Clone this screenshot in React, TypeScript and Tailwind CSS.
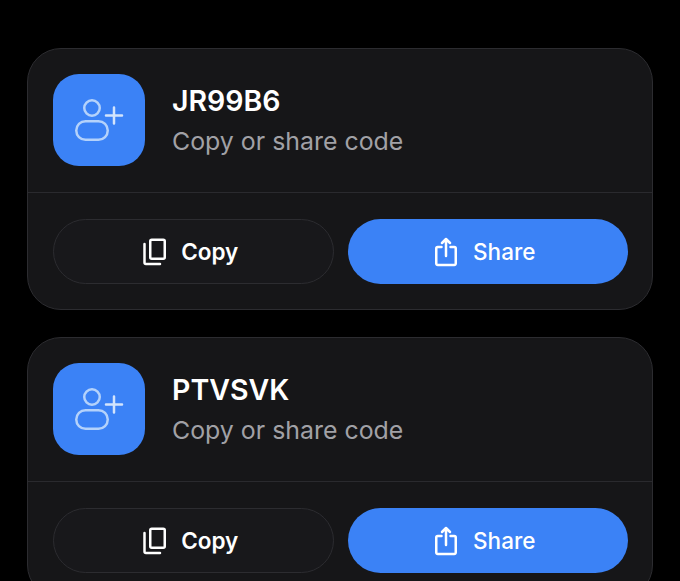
import React from 'react';

function AddUserIcon() {
  return (
    <svg width="50" height="44" viewBox="0 0 50 44" fill="none" className="text-[#b4d2fb]">
      <circle cx="18" cy="10" r="7.75" stroke="currentColor" strokeWidth="2.5" />
      <rect x="2.25" y="23.25" width="31.5" height="18.5" rx="9.25" stroke="currentColor" strokeWidth="2.5" />
      <path d="M40 9.5v16M32 17.5h16" stroke="#d3e4fc" strokeWidth="2.5" strokeLinecap="round" />
    </svg>
  );
}

function CopyIcon() {
  return (
    <svg width="23" height="28" viewBox="0 0 23 28" fill="none" stroke="white" strokeWidth="2.5">
      <rect x="7.25" y="1.75" width="14.5" height="19" rx="1.5" />
      <path d="M1.5 6v18.5a1.5 1.5 0 0 0 1.5 1.5h14" strokeLinecap="round" />
    </svg>
  );
}

function ShareIcon() {
  return (
    <svg width="22" height="30" viewBox="0 0 22 30" fill="none" stroke="white" strokeWidth="2.5" strokeLinecap="round" strokeLinejoin="round">
      <path d="M6.5 10H2.75a1.5 1.5 0 0 0-1.5 1.5v15a1.5 1.5 0 0 0 1.5 1.5h16.5a1.5 1.5 0 0 0 1.5-1.5v-15a1.5 1.5 0 0 0-1.5-1.5H15.5" />
      <path d="M11 19V2M7 6l4-4 4 4" />
    </svg>
  );
}

function CodeCard({ code }: { code: string }) {
  return (
    <div className="shrink-0 rounded-[34px] border border-[#2c2c30] bg-[#161618]">
      <div className="flex items-center gap-[27.5px] border-b border-[#2a2a2e] px-[24.5px] pt-[25px] pb-[26px]">
        <div className="flex h-[92px] w-[92px] items-center justify-center rounded-[26px] bg-[#3b82f6]">
          <AddUserIcon />
        </div>
        <div className="flex flex-col gap-[7px]">
          <div className="text-[28.5px] leading-[34px] font-semibold text-white">{code}</div>
          <div className="text-[24.9px] leading-[32px] text-[#a1a1a6]">Copy or share code</div>
        </div>
      </div>
      <div className="flex gap-[14px] px-[24.5px] pt-[26px] pb-[25px]">
        <button className="flex h-[65px] flex-1 items-center justify-center gap-[15px] rounded-full border border-[#2c2c30] bg-[#18181b] pr-[5px] text-[22.5px] font-semibold text-white">
          <CopyIcon />
          Copy
        </button>
        <button className="flex h-[65px] flex-1 items-center justify-center gap-[16px] rounded-full bg-[#3b82f6] pr-[5px] text-[22.5px] font-medium text-white">
          <ShareIcon />
          Share
        </button>
      </div>
    </div>
  );
}

export default function App() {
  return (
    <div className="flex h-[581px] flex-col gap-[27px] overflow-hidden bg-black px-[27px] pt-[48px] font-['Inter',sans-serif]">
      <CodeCard code="JR99B6" />
      <CodeCard code="PTVSVK" />
    </div>
  );
}
